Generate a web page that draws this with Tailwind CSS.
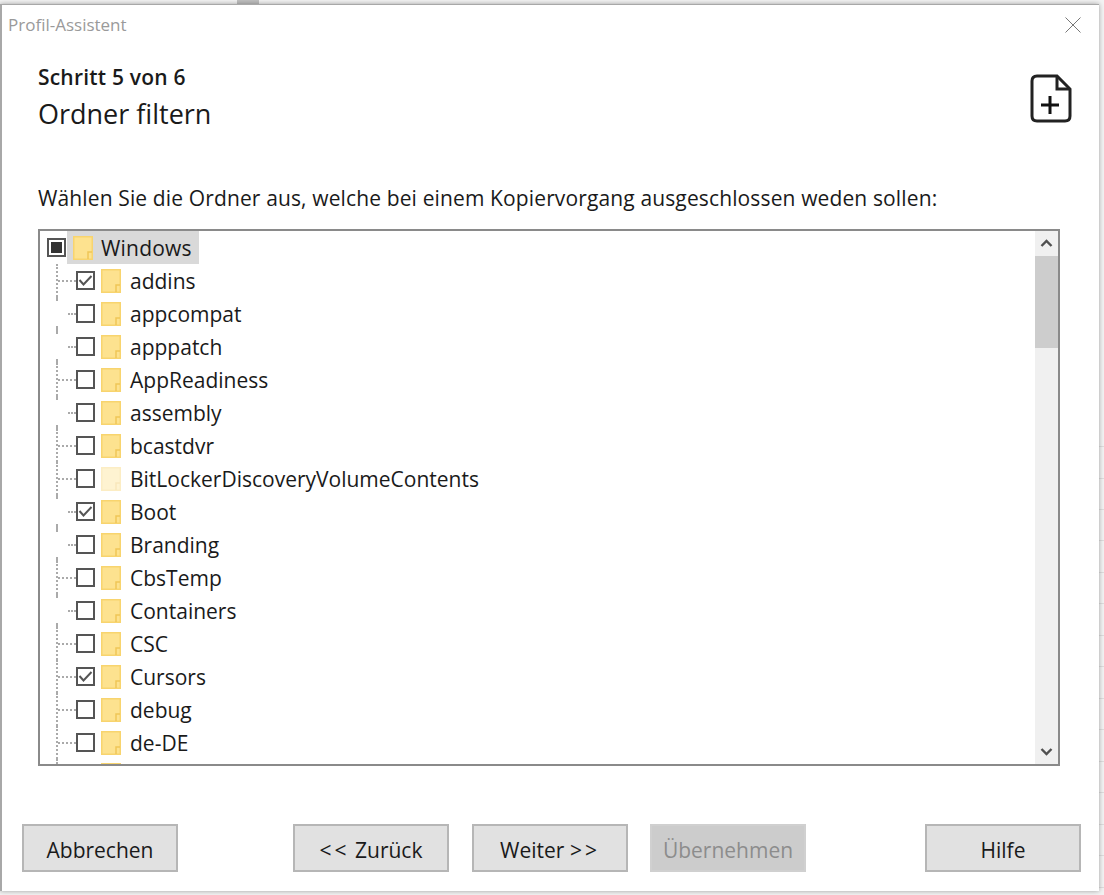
<!DOCTYPE html>
<html lang="de">
<head>
    <meta charset="UTF-8">
    <title>Profil-Assistent</title>
    <script src="https://cdn.jsdelivr.net/npm/@tailwindcss/browser@4"></script>
</head>
<body class="relative bg-[#f3f3f3] font-['Open_Sans','Noto_Sans',sans-serif] text-[#1a1a1a] h-[895px] overflow-hidden">

    <svg class="hidden">
        <symbol id="folder" viewBox="0 0 20 24">
            <path d="M0.75 0.75H19.25V23.25H0.75Z" fill="#fde28f" stroke="#f8d46e" stroke-width="1.5"/>
            <path d="M15 23V16H19" fill="none" stroke="#efc658" stroke-width="1.5"/>
        </symbol>
        <symbol id="check" viewBox="0 0 15 15">
            <path d="M1.5 7L5.5 11.5L13.5 3" fill="none" stroke="#555" stroke-width="2"/>
        </symbol>
    </svg>

    <!-- Bits of the window behind the dialog -->
    <div class="absolute left-[237px] top-0 w-[22px] h-[4px] bg-[#c0c0c0]"></div>
    <div class="absolute left-0 top-[101px] w-[2px] h-[39px] bg-[#0a6ebd]"></div>
    <div class="absolute left-[1097px] top-[4px] w-[2px] h-[39px] bg-[#a0a0a0]"></div>
    <div class="absolute right-0 top-[446px] w-[5px] h-[449px] bg-[repeating-linear-gradient(to_bottom,#dedede_0,#dedede_1px,transparent_1px,transparent_31.5px)]"></div>

    <!-- Dialog -->
    <div class="relative mt-[4px] w-[1099px] h-[887px] bg-white border-t border-l-2 border-[#a8a8a8] shadow-[0_0_5px_rgba(0,0,0,0.35)] flex flex-col">

        <!-- Title bar -->
        <div class="flex justify-between items-center h-[40px] pl-[6px] pr-[18px]">
            <span class="text-[17px] text-[#9a9a9a]">Profil-Assistent</span>
            <svg width="16" height="16" viewBox="0 0 16 16"><path d="M0.5 0.5L15.5 15.5M15.5 0.5L0.5 15.5" stroke="#777" fill="none"/></svg>
        </div>

        <!-- Step header -->
        <div class="flex justify-between pl-[36px] pr-[27px] h-[139px]">
            <div>
                <div class="text-[21px] font-semibold leading-[27px] mt-[19px] tracking-[0.2px]">Schritt 5 von 6</div>
                <div class="text-[27px] leading-[36px] mt-[5px]">Ordner filtern</div>
            </div>
            <svg class="mt-[29px]" width="42" height="50" viewBox="0 0 42 50">
                <path d="M7 2H27L40 15V42Q40 47 35 47H7Q2 47 2 42V7Q2 2 7 2Z" fill="none" stroke="#222" stroke-width="3"/>
                <path d="M27 2V15H40" fill="none" stroke="#222" stroke-width="3"/>
                <path d="M20 22V40M11 31H29" fill="none" stroke="#111" stroke-width="3"/>
            </svg>
        </div>

        <div class="pl-[36px] text-[21px] leading-[28px] tracking-[0.13px]">Wählen Sie die Ordner aus, welche bei einem Kopiervorgang ausgeschlossen weden sollen:</div>

        <!-- Folder tree -->
        <div class="ml-[36px] mt-[17px] w-[1022px] h-[537px] border-2 border-[#8a8a8a] flex overflow-hidden">
            <div class="flex-1 text-[21px] overflow-hidden">
                <div class="flex items-center h-[33px] pl-[7px]">
                    <span class="w-[19px] h-[19px] border-2 border-[#555] flex items-center justify-center"><span class="w-[11px] h-[11px] bg-[#333]"></span></span>
                    <span class="flex items-center h-[33px] pl-[6px] pr-[7px] ml-[1px] bg-[#d9d9d9]">
                        <svg class="w-[20px] h-[24px]"><use href="#folder"/></svg>
                        <span class="ml-[8px] mt-[2px] tracking-[0.2px]">Windows</span>
                    </span>
                </div>

                <div class="flex items-center h-[33px]">
                    <span class="w-[18px] h-full border-r-2 border-dotted border-[#aaa]"></span>
                    <span class="w-[18px] border-t-2 border-dotted border-[#aaa]"></span>
                    <span class="w-[19px] h-[19px] border-2 border-[#555]"><svg class="w-full h-full"><use href="#check"/></svg></span>
                    <svg class="ml-[6px] w-[20px] h-[24px]"><use href="#folder"/></svg>
                    <span class="ml-[9px] mt-[2px]">addins</span>
                </div>
                <div class="flex items-center h-[33px]">
                    <span class="w-[18px] h-full flex flex-col justify-between"><span class="h-[4px] border-r-2 border-dotted border-[#aaa]"></span><span class="h-[4px] border-r-2 border-dotted border-[#aaa]"></span></span>
                    <span class="ml-[10px] w-[8px] border-t-2 border-dotted border-[#aaa]"></span>
                    <span class="w-[19px] h-[19px] border-2 border-[#555]"></span>
                    <svg class="ml-[6px] w-[20px] h-[24px]"><use href="#folder"/></svg>
                    <span class="ml-[9px] mt-[2px]">appcompat</span>
                </div>
                <div class="flex items-center h-[33px]">
                    <span class="w-[18px] h-full flex flex-col justify-between"><span class="h-[4px] border-r-2 border-dotted border-[#aaa]"></span><span class="h-[4px] border-r-2 border-dotted border-[#aaa]"></span></span>
                    <span class="ml-[10px] w-[8px] border-t-2 border-dotted border-[#aaa]"></span>
                    <span class="w-[19px] h-[19px] border-2 border-[#555]"></span>
                    <svg class="ml-[6px] w-[20px] h-[24px]"><use href="#folder"/></svg>
                    <span class="ml-[9px] mt-[2px]">apppatch</span>
                </div>
                <div class="flex items-center h-[33px]">
                    <span class="w-[18px] h-full border-r-2 border-dotted border-[#aaa]"></span>
                    <span class="w-[18px] border-t-2 border-dotted border-[#aaa]"></span>
                    <span class="w-[19px] h-[19px] border-2 border-[#555]"></span>
                    <svg class="ml-[6px] w-[20px] h-[24px]"><use href="#folder"/></svg>
                    <span class="ml-[9px] mt-[2px]">AppReadiness</span>
                </div>
                <div class="flex items-center h-[33px]">
                    <span class="w-[18px] h-full flex flex-col justify-between"><span class="h-[4px] border-r-2 border-dotted border-[#aaa]"></span><span class="h-[4px] border-r-2 border-dotted border-[#aaa]"></span></span>
                    <span class="ml-[10px] w-[8px] border-t-2 border-dotted border-[#aaa]"></span>
                    <span class="w-[19px] h-[19px] border-2 border-[#555]"></span>
                    <svg class="ml-[6px] w-[20px] h-[24px]"><use href="#folder"/></svg>
                    <span class="ml-[9px] mt-[2px]">assembly</span>
                </div>
                <div class="flex items-center h-[33px]">
                    <span class="w-[18px] h-full border-r-2 border-dotted border-[#aaa]"></span>
                    <span class="w-[18px] border-t-2 border-dotted border-[#aaa]"></span>
                    <span class="w-[19px] h-[19px] border-2 border-[#555]"></span>
                    <svg class="ml-[6px] w-[20px] h-[24px]"><use href="#folder"/></svg>
                    <span class="ml-[9px] mt-[2px]">bcastdvr</span>
                </div>
                <div class="flex items-center h-[33px]">
                    <span class="w-[18px] h-full border-r-2 border-dotted border-[#aaa]"></span>
                    <span class="w-[18px] border-t-2 border-dotted border-[#aaa]"></span>
                    <span class="w-[19px] h-[19px] border-2 border-[#555]"></span>
                    <svg class="ml-[6px] w-[20px] h-[24px] opacity-40"><use href="#folder"/></svg>
                    <span class="ml-[9px] mt-[2px]">BitLockerDiscoveryVolumeContents</span>
                </div>
                <div class="flex items-center h-[33px]">
                    <span class="w-[18px] h-full flex flex-col justify-between"><span class="h-[4px] border-r-2 border-dotted border-[#aaa]"></span><span class="h-[4px] border-r-2 border-dotted border-[#aaa]"></span></span>
                    <span class="ml-[10px] w-[8px] border-t-2 border-dotted border-[#aaa]"></span>
                    <span class="w-[19px] h-[19px] border-2 border-[#555]"><svg class="w-full h-full"><use href="#check"/></svg></span>
                    <svg class="ml-[6px] w-[20px] h-[24px]"><use href="#folder"/></svg>
                    <span class="ml-[9px] mt-[2px]">Boot</span>
                </div>
                <div class="flex items-center h-[33px]">
                    <span class="w-[18px] h-full flex flex-col justify-between"><span class="h-[4px] border-r-2 border-dotted border-[#aaa]"></span><span class="h-[4px] border-r-2 border-dotted border-[#aaa]"></span></span>
                    <span class="ml-[10px] w-[8px] border-t-2 border-dotted border-[#aaa]"></span>
                    <span class="w-[19px] h-[19px] border-2 border-[#555]"></span>
                    <svg class="ml-[6px] w-[20px] h-[24px]"><use href="#folder"/></svg>
                    <span class="ml-[9px] mt-[2px]">Branding</span>
                </div>
                <div class="flex items-center h-[33px]">
                    <span class="w-[18px] h-full border-r-2 border-dotted border-[#aaa]"></span>
                    <span class="w-[18px] border-t-2 border-dotted border-[#aaa]"></span>
                    <span class="w-[19px] h-[19px] border-2 border-[#555]"></span>
                    <svg class="ml-[6px] w-[20px] h-[24px]"><use href="#folder"/></svg>
                    <span class="ml-[9px] mt-[2px]">CbsTemp</span>
                </div>
                <div class="flex items-center h-[33px]">
                    <span class="w-[18px] h-full flex flex-col justify-between"><span class="h-[4px] border-r-2 border-dotted border-[#aaa]"></span><span class="h-[4px] border-r-2 border-dotted border-[#aaa]"></span></span>
                    <span class="ml-[10px] w-[8px] border-t-2 border-dotted border-[#aaa]"></span>
                    <span class="w-[19px] h-[19px] border-2 border-[#555]"></span>
                    <svg class="ml-[6px] w-[20px] h-[24px]"><use href="#folder"/></svg>
                    <span class="ml-[9px] mt-[2px]">Containers</span>
                </div>
                <div class="flex items-center h-[33px]">
                    <span class="w-[18px] h-full border-r-2 border-dotted border-[#aaa]"></span>
                    <span class="w-[18px] border-t-2 border-dotted border-[#aaa]"></span>
                    <span class="w-[19px] h-[19px] border-2 border-[#555]"></span>
                    <svg class="ml-[6px] w-[20px] h-[24px]"><use href="#folder"/></svg>
                    <span class="ml-[9px] mt-[2px]">CSC</span>
                </div>
                <div class="flex items-center h-[33px]">
                    <span class="w-[18px] h-full border-r-2 border-dotted border-[#aaa]"></span>
                    <span class="w-[18px] border-t-2 border-dotted border-[#aaa]"></span>
                    <span class="w-[19px] h-[19px] border-2 border-[#555]"><svg class="w-full h-full"><use href="#check"/></svg></span>
                    <svg class="ml-[6px] w-[20px] h-[24px]"><use href="#folder"/></svg>
                    <span class="ml-[9px] mt-[2px]">Cursors</span>
                </div>
                <div class="flex items-center h-[33px]">
                    <span class="w-[18px] h-full border-r-2 border-dotted border-[#aaa]"></span>
                    <span class="w-[18px] border-t-2 border-dotted border-[#aaa]"></span>
                    <span class="w-[19px] h-[19px] border-2 border-[#555]"></span>
                    <svg class="ml-[6px] w-[20px] h-[24px]"><use href="#folder"/></svg>
                    <span class="ml-[9px] mt-[2px]">debug</span>
                </div>
                <div class="flex items-center h-[33px]">
                    <span class="w-[18px] h-full border-r-2 border-dotted border-[#aaa]"></span>
                    <span class="w-[18px] border-t-2 border-dotted border-[#aaa]"></span>
                    <span class="w-[19px] h-[19px] border-2 border-[#555]"></span>
                    <svg class="ml-[6px] w-[20px] h-[24px]"><use href="#folder"/></svg>
                    <span class="ml-[9px] mt-[2px]">de-DE</span>
                </div>
                <!-- next row, cut off by the box -->
                <div class="flex h-[33px]">
                    <span class="w-[18px] h-full border-r-2 border-dotted border-[#aaa]"></span>
                    <span class="ml-[43px] mt-[4px] w-[20px] h-[24px]"><svg class="w-[20px] h-[24px]"><use href="#folder"/></svg></span>
                </div>
            </div>

            <!-- Scrollbar -->
            <div class="w-[23px] bg-[#f0f0f0] flex flex-col">
                <div class="h-[25px] flex items-center justify-center">
                    <svg width="13" height="9" viewBox="0 0 13 9"><path d="M1.5 7L6.5 2L11.5 7" fill="none" stroke="#505050" stroke-width="2.4"/></svg>
                </div>
                <div class="h-[92px] bg-[#cdcdcd]"></div>
                <div class="flex-1"></div>
                <div class="h-[25px] flex items-center justify-center">
                    <svg width="13" height="9" viewBox="0 0 13 9"><path d="M1.5 2L6.5 7L11.5 2" fill="none" stroke="#505050" stroke-width="2.4"/></svg>
                </div>
            </div>
        </div>

        <!-- Buttons -->
        <div class="mt-[58px] ml-[20px] flex text-[21px]">
            <button class="w-[156px] h-[48px] pt-[5px] bg-[#e1e1e1] border-2 border-[#b6b6b6]">Abbrechen</button>
            <button class="ml-[115px] w-[156px] h-[48px] pt-[5px] bg-[#e1e1e1] border-2 border-[#b6b6b6]"><span class="tracking-[3px]">&lt;&lt;</span> Zurück</button>
            <button class="ml-[23px] w-[156px] h-[48px] pt-[5px] bg-[#e1e1e1] border-2 border-[#b6b6b6]">Weiter <span class="tracking-[3px]">&gt;&gt;</span></button>
            <button class="ml-[22px] w-[156px] h-[48px] pt-[5px] bg-[#cccccc] border-2 border-[#d0d0d0] text-[#8c8c8c]">Übernehmen</button>
            <button class="ml-[119px] w-[156px] h-[48px] pt-[5px] bg-[#e1e1e1] border-2 border-[#b6b6b6]">Hilfe</button>
        </div>
    </div>

</body>
</html>
